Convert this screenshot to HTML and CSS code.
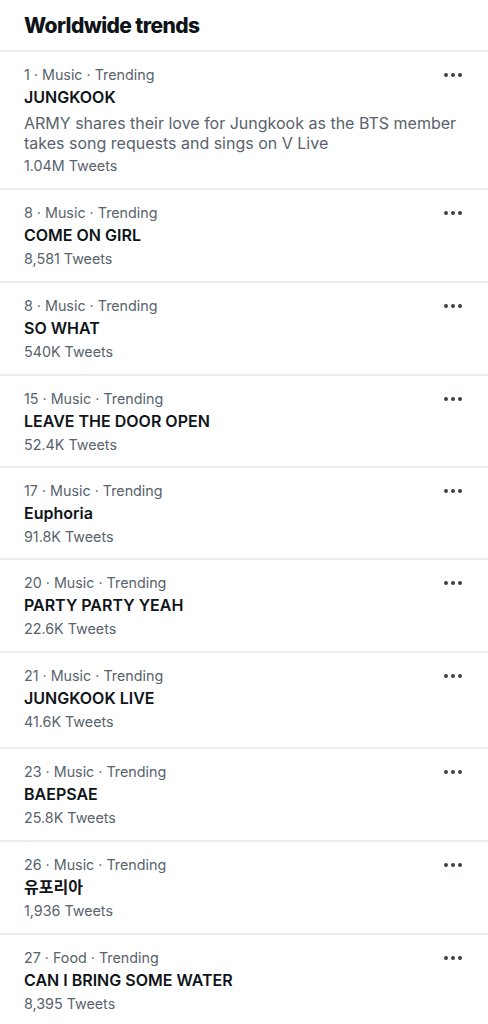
FILE: index.html
```html
<!DOCTYPE html>
<html lang="en">

<head>
    <meta charset="UTF-8">
    <title>Worldwide trends</title>
    <link rel="stylesheet" href="styles.css">
</head>

<body>
    <div class="panel">
        <h1 class="panel-title">Worldwide trends</h1>

        <div class="trend">
            <div class="trend-top">
                <span class="trend-meta">1 · Music · Trending</span>
                <span class="more"><i></i><i></i><i></i></span>
            </div>
            <div class="trend-name">JUNGKOOK</div>
            <div class="trend-desc">ARMY shares their love for Jungkook as the BTS member takes song requests and sings on V Live</div>
            <div class="trend-count">1.04M Tweets</div>
        </div>

        <div class="trend">
            <div class="trend-top">
                <span class="trend-meta">8 · Music · Trending</span>
                <span class="more"><i></i><i></i><i></i></span>
            </div>
            <div class="trend-name">COME ON GIRL</div>
            <div class="trend-count">8,581 Tweets</div>
        </div>

        <div class="trend">
            <div class="trend-top">
                <span class="trend-meta">8 · Music · Trending</span>
                <span class="more"><i></i><i></i><i></i></span>
            </div>
            <div class="trend-name">SO WHAT</div>
            <div class="trend-count">540K Tweets</div>
        </div>

        <div class="trend short">
            <div class="trend-top">
                <span class="trend-meta">15 · Music · Trending</span>
                <span class="more"><i></i><i></i><i></i></span>
            </div>
            <div class="trend-name">LEAVE THE DOOR OPEN</div>
            <div class="trend-count">52.4K Tweets</div>
        </div>

        <div class="trend short">
            <div class="trend-top">
                <span class="trend-meta">17 · Music · Trending</span>
                <span class="more"><i></i><i></i><i></i></span>
            </div>
            <div class="trend-name">Euphoria</div>
            <div class="trend-count">91.8K Tweets</div>
        </div>

        <div class="trend">
            <div class="trend-top">
                <span class="trend-meta">20 · Music · Trending</span>
                <span class="more"><i></i><i></i><i></i></span>
            </div>
            <div class="trend-name">PARTY PARTY YEAH</div>
            <div class="trend-count">22.6K Tweets</div>
        </div>

        <div class="trend tall">
            <div class="trend-top">
                <span class="trend-meta">21 · Music · Trending</span>
                <span class="more"><i></i><i></i><i></i></span>
            </div>
            <div class="trend-name">JUNGKOOK LIVE</div>
            <div class="trend-count">41.6K Tweets</div>
        </div>

        <div class="trend">
            <div class="trend-top">
                <span class="trend-meta">23 · Music · Trending</span>
                <span class="more"><i></i><i></i><i></i></span>
            </div>
            <div class="trend-name">BAEPSAE</div>
            <div class="trend-count">25.8K Tweets</div>
        </div>

        <div class="trend">
            <div class="trend-top">
                <span class="trend-meta">26 · Music · Trending</span>
                <span class="more"><i></i><i></i><i></i></span>
            </div>
            <div class="trend-name">유포리아</div>
            <div class="trend-count">1,936 Tweets</div>
        </div>

        <div class="trend">
            <div class="trend-top">
                <span class="trend-meta">27 · Food · Trending</span>
                <span class="more"><i></i><i></i><i></i></span>
            </div>
            <div class="trend-name">CAN I BRING SOME WATER</div>
            <div class="trend-count">8,395 Tweets</div>
        </div>
    </div>
</body>

</html>
```

FILE: styles.css
```css
* {
    padding: 0px;
    margin: 0px;
    box-sizing: border-box;
}

body {
    background: #fff;
    font-family: Inter, "Noto Sans CJK KR", sans-serif;
    color: #0f1419;
}

.panel {
    width: 488px;
}

.panel-title {
    height: 52px;
    padding: 12px 24px 0;
    font-size: 21px;
    font-weight: 800;
    line-height: 28px;
    letter-spacing: -0.6px;
    border-bottom: 2px solid #ececec;
}

.trend {
    padding: 11px 26px 11px 24px;
    line-height: 23px;
    border-bottom: 2px solid #ececec;
}

.trend.short {
    padding-bottom: 10px;
}

.trend.tall {
    padding-bottom: 14px;
}

.trend-top {
    display: flex;
    justify-content: space-between;
    align-items: center;
}

.trend-meta,
.trend-count {
    font-size: 14.3px;
    color: #58636d;
}

.trend-name {
    font-size: 16px;
    font-weight: 600;
}

.trend-desc {
    font-size: 16px;
    line-height: 20px;
    color: #58636d;
    margin: 4px -8px 1px 0;
}

.more {
    display: flex;
    gap: 3px;
}

.more i {
    width: 4px;
    height: 4px;
    border-radius: 50%;
    background: #3c4248;
}
```
